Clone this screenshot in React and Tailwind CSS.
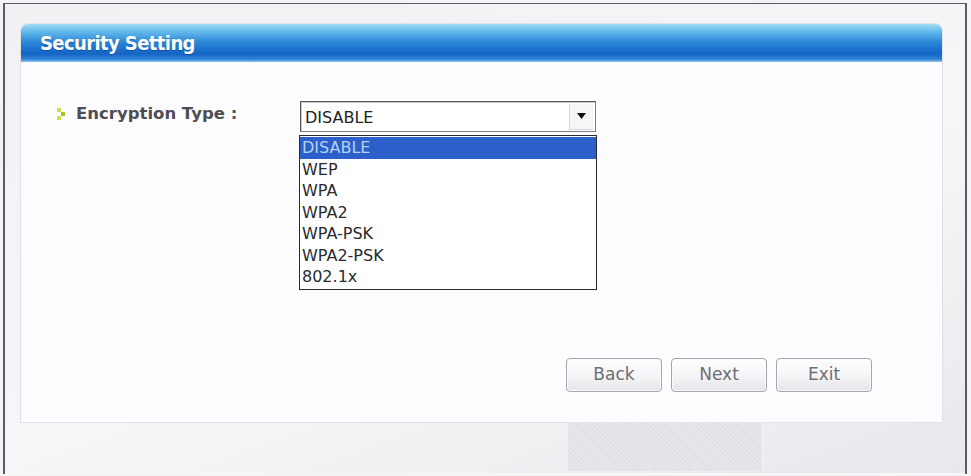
const options = ["DISABLE", "WEP", "WPA", "WPA2", "WPA-PSK", "WPA2-PSK", "802.1x"];

function Bullet() {
  return (
    <svg width="10" height="14" viewBox="0 0 10 14" className="shrink-0">
      <rect x="1" y="1" width="4" height="4" fill="#d3dc4c" />
      <rect x="5" y="5" width="4" height="4" fill="#a8bf30" />
      <rect x="1" y="9" width="4" height="4" fill="#d3dc4c" />
    </svg>
  );
}

function WizardButton({ children }) {
  return (
    <button className="w-[96px] h-[34px] rounded-[4px] border border-[#a6a6aa] bg-[linear-gradient(#ffffff,#f3f2f5_60%,#e4e3e7)] text-[17px] text-[#6e6e72] font-['DejaVu_Sans',sans-serif] shadow-[inset_0_0_0_1px_#fbfbfd]">
      {children}
    </button>
  );
}

export default function App() {
  return (
    <div className="w-[971px] h-[476px] bg-[#f4f4f6] pt-[3px] pl-[3px] pr-[4px] pb-[2px] font-['DejaVu_Sans',sans-serif]">
      <div className="h-full flex flex-col border-l-2 border-t border-r-2 border-[#5c5c60] bg-[linear-gradient(160deg,#f1f0f3_0%,#f6f6f8_55%,#e9e8ec_100%)]">
        <div className="pt-[20px] pl-[16px] pr-[23px]">
          <div className="h-[398px] flex flex-col bg-[#fdfcfe] rounded-t-[7px] shadow-[0_0_0_1px_#e2e1e6]">
            <div className="h-[38px] rounded-t-[7px] flex items-center pl-[19px] bg-[linear-gradient(#9fdcf5_0%,#5fb6ea_22%,#2b86d6_48%,#1565c6_78%,#2e80d6_92%,#8cc4ee_100%)]">
              <span className="text-white font-bold text-[20px] tracking-[-0.6px] font-['DejaVu_Sans_Condensed',sans-serif] [text-shadow:0_1px_1px_rgba(0,40,110,0.45)]">
                Security Setting
              </span>
            </div>

            <div className="flex-1 flex flex-col justify-between pt-[39px] pb-[30px]">
              <div className="flex items-start">
                <div className="w-[279px] flex items-center gap-[10px] pl-[35px] pt-[1px]">
                  <Bullet />
                  <span className="text-[16.5px] font-bold text-[#4e4e52]">Encryption Type :</span>
                </div>
                <div className="relative">
                  <div className="w-[296px] h-[31px] flex items-center bg-white border border-[#7b7b80] border-t-[#58585c] border-l-[#58585c] shadow-[inset_1px_1px_0_#c9c9cc]">
                    <span className="flex-1 pl-[4px] pt-[2px] text-[16px] text-[#222]">DISABLE</span>
                    <div className="w-[24px] h-[26px] mr-[2px] flex items-center justify-center bg-[#f6f6f8] border-l border-b border-[#d6d6da]">
                      <svg width="9" height="6" viewBox="0 0 9 6">
                        <path d="M0 0h9L4.5 6z" fill="#111" />
                      </svg>
                    </div>
                  </div>
                  <ul className="absolute left-[-1px] top-[34px] w-[298px] bg-white border border-[#2a2a2e] py-[1px] text-[16px] text-[#2a2a2e]">
                    {options.map((o, i) => (
                      <li
                        key={o}
                        className={
                          i === 0
                            ? "h-[21.5px] leading-[21.5px] pl-[2px] bg-[#2c5fc9] text-[#b5d2f5]"
                            : "h-[21.5px] leading-[21.5px] pl-[2px]"
                        }
                      >
                        {o}
                      </li>
                    ))}
                  </ul>
                </div>
              </div>

              <div className="flex justify-end gap-[9px] pr-[70px]">
                <WizardButton>Back</WizardButton>
                <WizardButton>Next</WizardButton>
                <WizardButton>Exit</WizardButton>
              </div>
            </div>
          </div>
        </div>

        <div className="flex-1 flex pl-[563px] pb-[2px] border-b border-[#f8f8fa]">
          <div className="w-[195px] bg-[repeating-linear-gradient(45deg,#e7e6ea_0px,#e7e6ea_2px,#dfdee3_2px,#dfdee3_3px)] border-r border-[#f7f7f9]" />
        </div>
      </div>
    </div>
  );
}
